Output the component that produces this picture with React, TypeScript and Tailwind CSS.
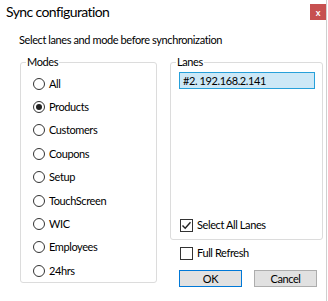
import React from "react";

const modes = ["All", "Products", "Customers", "Coupons", "Setup", "TouchScreen", "WIC", "Employees", "24hrs"];

function Radio({ label, checked }: { label: string; checked?: boolean }) {
  return (
    <div className="flex h-[23.4px] items-center">
      <span className="flex h-[12px] w-[12px] items-center justify-center rounded-full border border-[#333333] bg-white">
        {checked && <span className="h-[6px] w-[6px] rounded-full bg-[#222222]" />}
      </span>
      <span className="ml-[4px]">{label}</span>
    </div>
  );
}

function Check({ label, checked }: { label: string; checked?: boolean }) {
  return (
    <div className="flex items-center">
      <span className="flex h-[13px] w-[13px] items-center justify-center border border-[#333333] bg-white">
        {checked && (
          <svg width="11" height="11" viewBox="0 0 11 11">
            <path d="M1.5 5.5 L4.2 8.3 L9.5 2.2" fill="none" stroke="#222" strokeWidth="1.4" />
          </svg>
        )}
      </span>
      <span className="ml-[4px]">{label}</span>
    </div>
  );
}

export default function App() {
  return (
    <div
      className="relative h-[301px] w-[328px] overflow-hidden bg-white text-[11px] leading-[16px] tracking-[-0.4px] text-[#000]"
      style={{ fontFamily: 'Lato, "Open Sans", sans-serif' }}
    >
      <div className="flex h-[24px] items-center justify-between pl-[6px] pr-[2px]">
        <span className="text-[14px] leading-[20px] tracking-[-0.6px] text-[#000]">Sync configuration</span>
        <span className="flex h-[16px] w-[16px] items-center justify-center bg-[#c75050] text-[9px] font-bold leading-none tracking-normal text-white">x</span>
      </div>
      <div className="mt-[8px] pl-[19px]">Select lanes and mode before synchronization</div>
      <div className="mt-[6px] flex pl-[20px]">
        <fieldset className="h-[229px] w-[137px] rounded-[3px] border border-[#dcdcdc]">
          <legend className="ml-[5px] px-[1px]">Modes</legend>
          <div className="pl-[12px] pt-[2px]">
            {modes.map((m) => (
              <Radio key={m} label={m} checked={m === "Products"} />
            ))}
          </div>
        </fieldset>
        <div className="ml-[13px] flex flex-col">
          <fieldset className="w-[153px] rounded-[3px] border border-[#dcdcdc]">
            <legend className="ml-[5px] px-[1px]">Lanes</legend>
            <div className="flex h-[169px] flex-col">
              <div className="ml-[8px] mr-[7px] mt-[2px] flex h-[17px] items-center border border-[#26a0da] bg-[#cce8f7] pl-[3px]">
                #2. 192.168.2.141
              </div>
              <div className="mt-auto mb-[6px] ml-[9px]">
                <Check label="Select All Lanes" checked />
              </div>
            </div>
          </fieldset>
          <div className="ml-[10px] mt-[5px]">
            <Check label="Full Refresh" />
          </div>
          <div className="ml-[9px] mt-[9px] flex gap-[12px]">
            <div className="flex h-[17px] w-[63px] items-center justify-center border border-[#0078d7] bg-[#e1e1e1]">OK</div>
            <div className="flex h-[17px] w-[63px] items-center justify-center border border-[#adadad] bg-[#e1e1e1]">Cancel</div>
          </div>
        </div>
      </div>
      <div className="absolute right-[1px] top-0 h-full w-[1px] bg-[#cfcfcf]" />
    </div>
  );
}
